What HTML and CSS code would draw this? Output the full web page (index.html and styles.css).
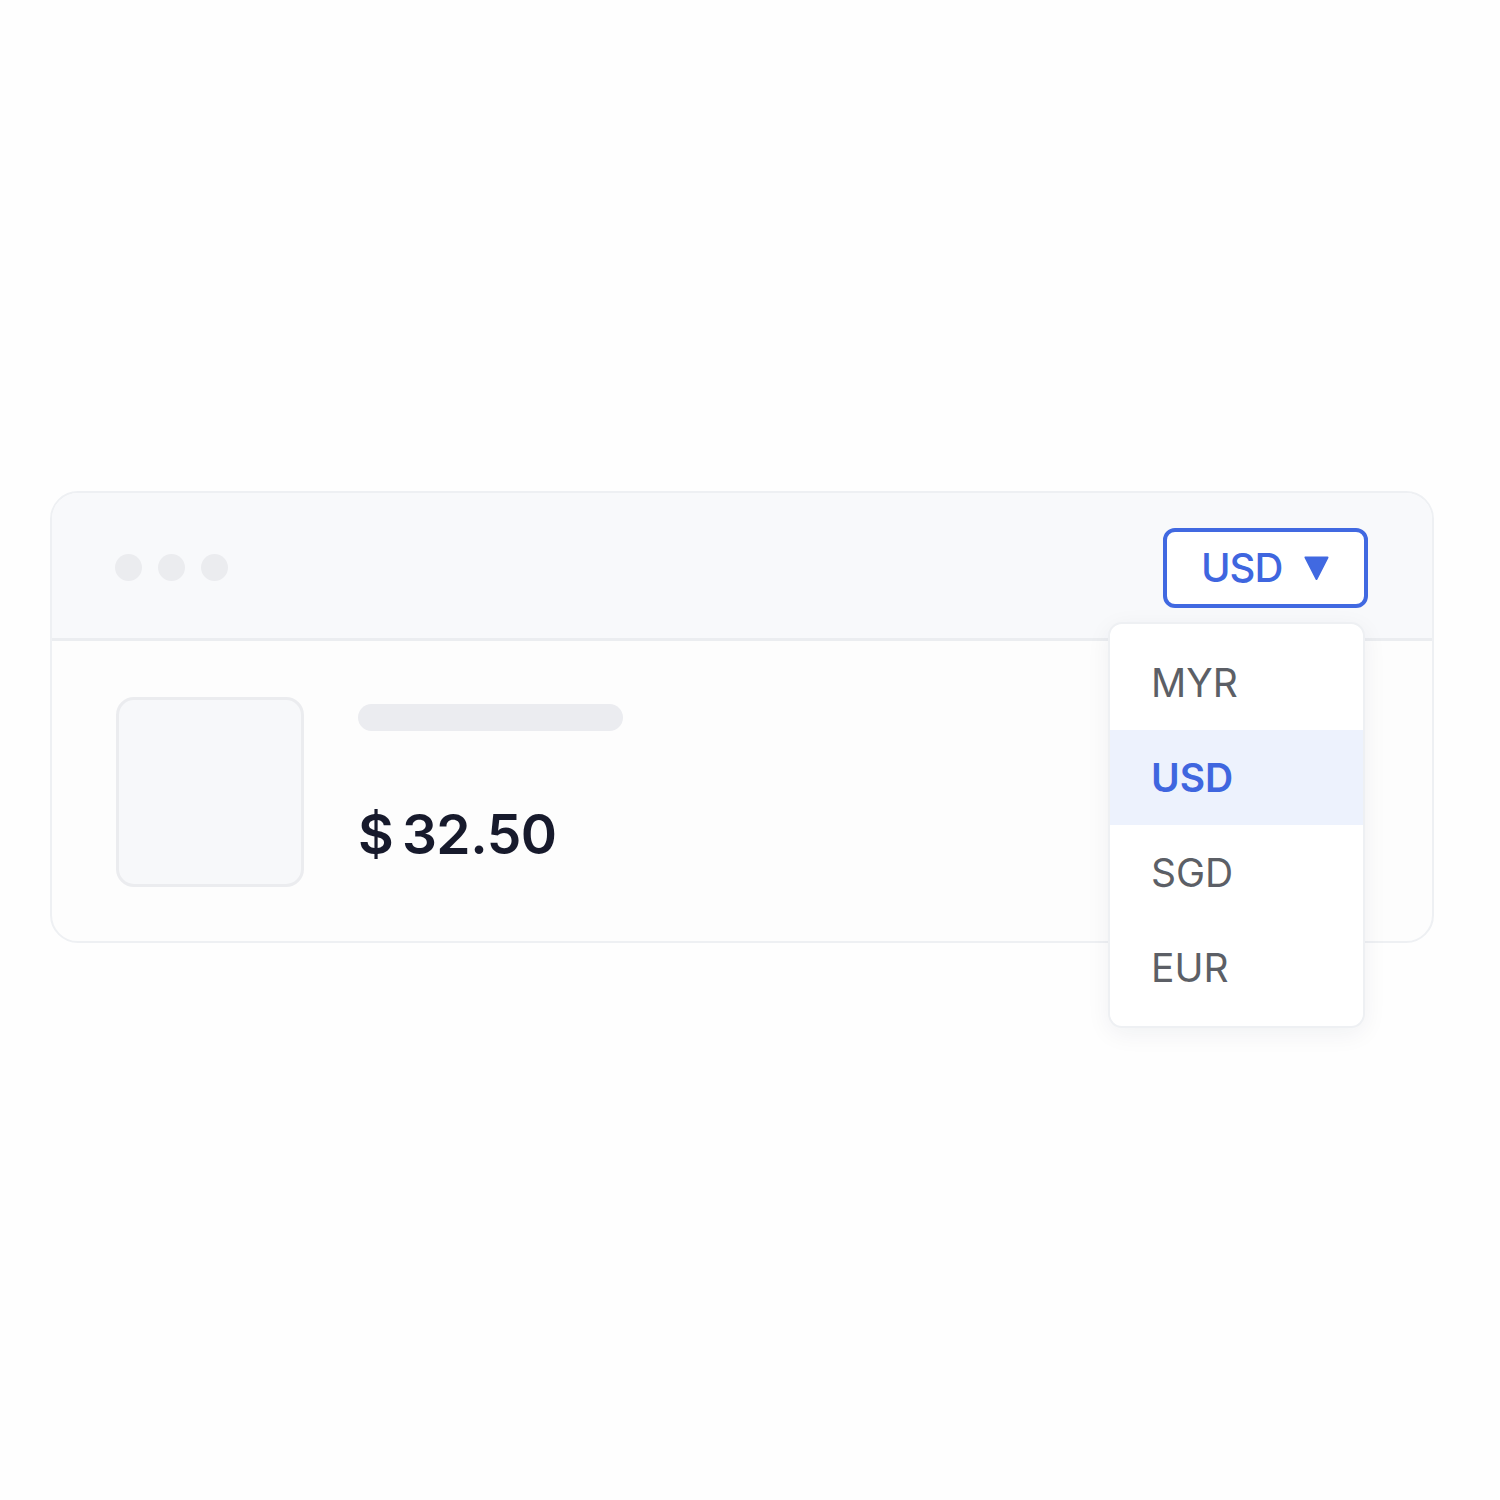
FILE: index.html
```html
<!DOCTYPE html>
<html lang="en">
<head>
<meta charset="utf-8">
<title>Currency switcher</title>
<link rel="stylesheet" href="styles.css">
</head>
<body>
<main class="stage">
  <section class="window">
    <header class="window-bar">
      <div class="dots">
        <span class="dot"></span>
        <span class="dot"></span>
        <span class="dot"></span>
      </div>
      <div class="currency">
        <button class="currency-btn" type="button">
          <span class="currency-code">USD</span>
          <svg class="caret" width="25" height="24" viewBox="0 0 25 24" aria-hidden="true">
            <path d="M1.5 1.5 H23.5 L12.5 23 Z" fill="#4169e1" stroke="#4169e1" stroke-width="2" stroke-linejoin="round"/>
          </svg>
        </button>
        <ul class="menu">
          <li class="menu-item">MYR</li>
          <li class="menu-item is-active">USD</li>
          <li class="menu-item">SGD</li>
          <li class="menu-item">EUR</li>
        </ul>
      </div>
    </header>
    <div class="window-body">
      <div class="thumb"></div>
      <div class="info">
        <div class="title-bar"></div>
        <div class="price">$&#8201;32.50</div>
      </div>
    </div>
  </section>
</main>
</body>
</html>
```

FILE: styles.css
```css
* {
  box-sizing: border-box;
}

html, body {
  margin: 0;
  padding: 0;
  background: #fefefe;
}

body {
  font-family: "Inter", "Liberation Sans", sans-serif;
  width: 1500px;
  height: 1500px;
}

.stage {
  padding: 491px 66px 0 50px;
}

.window {
  width: 1384px;
  height: 452px;
  border: 2px solid #eef0f3;
  border-radius: 28px;
  background: #fdfdfd;
}

.window-bar {
  height: 148px;
  display: flex;
  align-items: center;
  justify-content: space-between;
  padding: 0 64px 0 63px;
  background: #f8f9fb;
  border-bottom: 3px solid #ebedf0;
  border-radius: 26px 26px 0 0;
}

.dots {
  display: flex;
  gap: 16px;
  margin-top: 4px;
}

.dot {
  width: 27px;
  height: 27px;
  border-radius: 50%;
  background: #ebecef;
}

.currency {
  position: relative;
  margin-top: 4px;
}

.currency-btn {
  display: flex;
  align-items: center;
  gap: 22px;
  width: 205px;
  height: 80px;
  padding: 0 0 0 34px;
  border: 4px solid #4169e1;
  border-radius: 12px;
  background: #ffffff;
  font-family: inherit;
  cursor: pointer;
}

.currency-code {
  font-size: 40px;
  line-height: 1;
  font-weight: 500;
  color: #3f66df;
  letter-spacing: -1px;
}

.caret {
  display: block;
}

.menu {
  position: absolute;
  top: 94px;
  right: 3px;
  width: 257px;
  margin: 0;
  padding: 11px 0;
  list-style: none;
  background: #ffffff;
  border: 2px solid #eef0f3;
  border-radius: 14px;
  box-shadow: 0 6px 24px rgba(20, 30, 60, 0.06);
}

.menu-item {
  height: 95px;
  display: flex;
  align-items: center;
  padding-left: 41px;
  font-size: 39px;
  line-height: 1;
  font-weight: 400;
  color: #5c5f66;
}

.menu-item.is-active {
  background: #edf2fd;
  color: #3f66df;
  font-weight: 600;
}

.window-body {
  display: flex;
  gap: 54px;
  padding: 56px 0 0 64px;
}

.thumb {
  width: 188px;
  height: 190px;
  border: 3px solid #ebecef;
  border-radius: 18px;
  background: #f7f8fa;
}

.info {
  padding-top: 7px;
}

.title-bar {
  width: 265px;
  height: 27px;
  border-radius: 14px;
  background: #ebecf0;
}

.price {
  margin-top: 76px;
  font-size: 55px;
  line-height: 1;
  font-weight: 600;
  color: #171a2c;
  letter-spacing: -0.5px;
}
```
